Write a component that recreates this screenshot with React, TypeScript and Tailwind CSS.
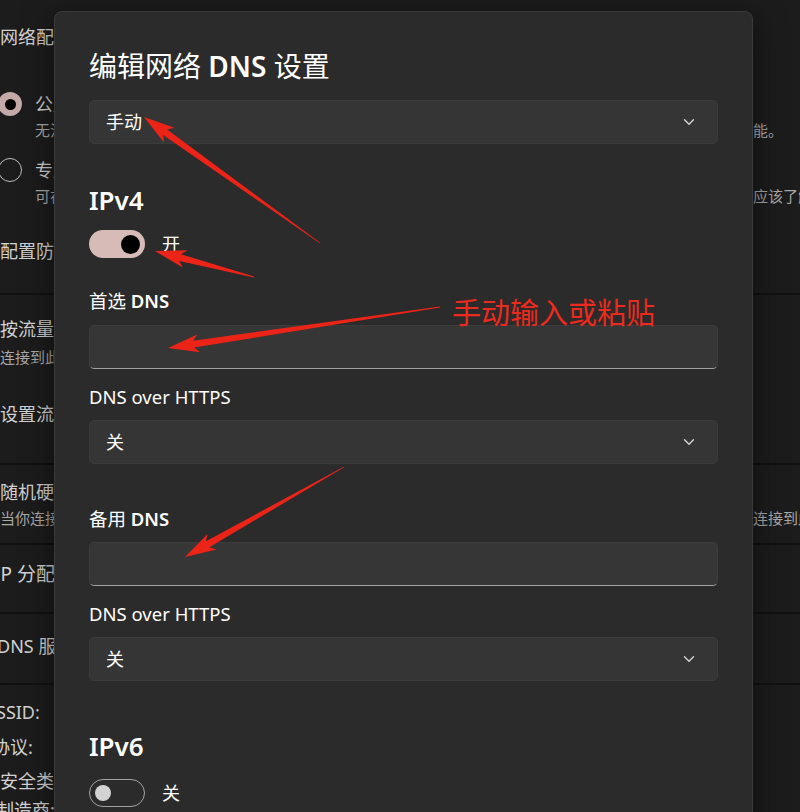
import React from "react";

type Pt = [number, number];

// tapered annotation arrow, tail is a hairline and it thickens toward the head
const arrowPoints = (tail: Pt, tip: Pt, head = 26, wing = 9) => {
  const dx = tip[0] - tail[0];
  const dy = tip[1] - tail[1];
  const len = Math.hypot(dx, dy);
  const ux = dx / len;
  const uy = dy / len;
  const nx = -uy;
  const ny = ux;
  const bx = tip[0] - ux * head;
  const by = tip[1] - uy * head;
  const p = (x: number, y: number) => `${x.toFixed(1)},${y.toFixed(1)}`;
  return [
    p(tail[0] + nx * 0.4, tail[1] + ny * 0.4),
    p(bx + nx * 3.4, by + ny * 3.4),
    p(bx - ux * 5 + nx * wing, by - uy * 5 + ny * wing),
    p(tip[0], tip[1]),
    p(bx - ux * 5 - nx * wing, by - uy * 5 - ny * wing),
    p(bx - nx * 3.4, by - ny * 3.4),
    p(tail[0] - nx * 0.4, tail[1] - ny * 0.4),
  ].join(" ");
};

const arrows: [Pt, Pt][] = [
  [[320, 243], [144, 117]],
  [[254, 277], [155, 251]],
  [[440, 307], [168, 348]],
  [[344, 467], [185, 557]],
];

const Chevron = () => (
  <svg width="12" height="8" viewBox="0 0 12 8">
    <path d="M1.5 1.8 6 6.2l4.5-4.4" stroke="#d4d4d4" strokeWidth="1.4" fill="none" strokeLinecap="round" strokeLinejoin="round" />
  </svg>
);

const Select = ({ value }: { value: string }) => (
  <div className="flex h-[44px] items-center justify-between rounded-[5px] border border-[#3b3b3b] bg-[#353535] pl-[16px] pr-[22px] text-[18px] text-white">
    <span>{value}</span>
    <Chevron />
  </div>
);

const Input = () => (
  <div className="h-[44px] rounded-[5px] border border-[#3c3c3c] border-b-[#a2a2a2] bg-[#363636]" />
);

const Label = ({ cn, latin }: { cn?: string; latin: string }) => (
  <div className="h-[26px] text-[18.5px] leading-[26px] text-white">
    {cn && <span>{cn} </span>}
    <span className={cn ? "font-semibold" : ""}>{latin}</span>
  </div>
);

const Line = ({ left, right, sub, className = "" }: { left: string; right?: string; sub?: boolean; className?: string }) => (
  <div className={`flex h-[26px] items-center justify-between whitespace-nowrap ${sub ? "text-[15px] text-[#a9a9a9]" : "text-[18px] text-[#d2d2d2]"} ${className}`}>
    <span>{left}</span>
    {right && <span className="w-[47px] overflow-hidden">{right}</span>}
  </div>
);

const Sep = () => <div className="h-[2px] shrink-0 bg-[#121111]" />;

export default function App() {
  return (
    <div className="relative h-[812px] w-[800px] overflow-hidden bg-[#1d1c1c] font-['Noto_Sans','Noto_Sans_CJK_SC',sans-serif]">
      {/* settings page behind the dialog */}
      <div className="flex h-full flex-col">
        <div className="h-[293px] shrink-0 pt-[24px]">
          <Line left="网络配置文件类型" />
          <div className="mt-[41px] flex h-[26px] items-center whitespace-nowrap text-[18px] text-[#d2d2d2]">
            <div className="ml-[-2px] flex h-6 w-6 items-center justify-center rounded-full bg-[#c3a9a7]">
              <div className="h-[11px] w-[11px] rounded-full bg-black" />
            </div>
            <span className="ml-[13px]">公用网络(推荐)</span>
          </div>
          <Line sub left="无法在网络上发现你的设备" right="能。" className="pl-[35px]" />
          <div className="mt-[14px] flex h-[26px] items-center whitespace-nowrap text-[18px] text-[#d2d2d2]">
            <div className="ml-[-2px] h-6 w-6 rounded-full border border-[#bdbdbd]" />
            <span className="ml-[13px]">专用网络</span>
          </div>
          <Line sub left="可在网络上发现你的设备" right="应该了解" className="pl-[35px]" />
          <Line left="配置防火墙和安全设置" className="mt-[29px]" />
        </div>
        <Sep />
        <div className="h-[168px] shrink-0 pt-[21px]">
          <Line left="按流量计费的连接" />
          <Line sub left="连接到此网络时" className="mt-[2px]" />
          <Line left="设置流量上限" className="mt-[31px]" />
        </div>
        <Sep />
        <div className="h-[78px] shrink-0 pt-[14px]">
          <Line left="随机硬件地址" />
          <Line sub left="当你连接到此网络时" right="连接到此" />
        </div>
        <Sep />
        <div className="h-[67px] shrink-0 pt-[16px]">
          <Line left="IP 分配:" className="ml-[-6px] text-[19px]" />
        </div>
        <Sep />
        <div className="h-[69px] shrink-0 pt-[19px]">
          <Line left="DNS 服务器分配:" className="ml-[-3px]" />
        </div>
        <Sep />
        <div className="shrink-0 pt-[14px] text-[#d2d2d2]">
          <Line left="SSID:" className="ml-[-4px]" />
          <Line left="协议:" className="mt-[9px] ml-[-8px]" />
          <Line left="安全类型:" className="mt-[8px]" />
          <Line left="制造商:" className="mt-[3px] ml-[-4px]" />
        </div>
      </div>

      {/* dialog */}
      <div className="absolute left-[54px] top-[11px] h-[830px] w-[699px] rounded-[8px] border border-[#3a3a3a] bg-[#2b2b2b] px-[34px] pt-[35px] shadow-[0_8px_32px_rgba(0,0,0,0.55)]">
        <div className="h-[38px] text-[28px] leading-[38px] text-white">
          编辑网络 <span className="font-semibold">DNS</span> 设置
        </div>
        <div className="mt-[15px]">
          <Select value="手动" />
        </div>

        <div className="mt-[39px] h-[34px] text-[26px] font-semibold leading-[34px] text-white">IPv4</div>
        <div className="mt-[13px] flex h-[28px] items-center">
          <div className="flex h-[28px] w-[56px] items-center justify-end rounded-full bg-[#d7bbb7] pr-[5px]">
            <div className="h-[19px] w-[19px] rounded-full bg-black" />
          </div>
          <span className="ml-[17px] text-[18px] text-white">开</span>
        </div>

        <div className="mt-[30px]">
          <Label cn="首选" latin="DNS" />
        </div>
        <div className="mt-[11px]">
          <Input />
        </div>
        <div className="mt-[15px]">
          <Label latin="DNS over HTTPS" />
        </div>
        <div className="mt-[10px]">
          <Select value="关" />
        </div>

        <div className="mt-[42px]">
          <Label cn="备用" latin="DNS" />
        </div>
        <div className="mt-[10px]">
          <Input />
        </div>
        <div className="mt-[15px]">
          <Label latin="DNS over HTTPS" />
        </div>
        <div className="mt-[10px]">
          <Select value="关" />
        </div>

        <div className="mt-[48px] h-[34px] text-[26px] font-semibold leading-[34px] text-white">IPv6</div>
        <div className="mt-[16px] flex h-[28px] items-center">
          <div className="flex h-[28px] w-[56px] items-center rounded-full border border-[#a3a3a3] pl-[5px]">
            <div className="h-[16px] w-[16px] rounded-full bg-[#d2d2d2]" />
          </div>
          <span className="ml-[17px] text-[18px] text-white">关</span>
        </div>
      </div>

      {/* red annotations */}
      <svg className="pointer-events-none absolute inset-0" width="800" height="812" viewBox="0 0 800 812">
        {arrows.map(([tail, tip], i) => (
          <polygon key={i} points={arrowPoints(tail, tip)} fill="#ec2418" />
        ))}
      </svg>
      <div className="pointer-events-none absolute left-[452px] top-[296px] text-[29px] leading-[34px] text-[#ec2a1e]">
        手动输入或粘贴
      </div>
    </div>
  );
}
